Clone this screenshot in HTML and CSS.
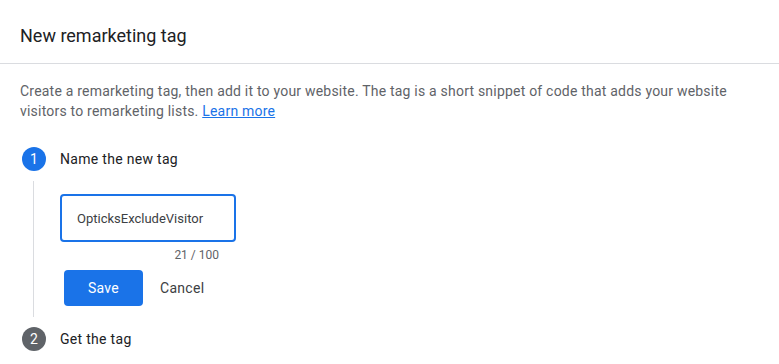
FILE: index.html
```html
<!DOCTYPE html>
<html lang="en">

<head>
    <meta charset="UTF-8">
    <meta name="viewport" content="width=device-width, initial-scale=1.0">
    <title>New remarketing tag</title>
    <link rel="stylesheet" href="styles.css">
</head>

<body>
    <div class="dialog">
        <div class="dialog-header">
            <h1>New remarketing tag</h1>
        </div>
        <div class="dialog-body">
            <p class="intro">
                Create a remarketing tag, then add it to your website. The tag is a short snippet of code that adds your website
                visitors to remarketing lists. <a href="#" class="link">Learn more</a>
            </p>

            <div class="steps">
                <div class="step">
                    <div class="step-head">
                        <span class="step-num active">1</span>
                        <span class="step-title">Name the new tag</span>
                    </div>
                    <div class="step-content">
                        <div class="field">
                            <input class="text-input" type="text" value="OpticksExcludeVisitor">
                            <div class="counter">21 / 100</div>
                        </div>
                        <div class="actions">
                            <button class="btn btn-primary">Save</button>
                            <button class="btn btn-text">Cancel</button>
                        </div>
                    </div>
                </div>
                <div class="step">
                    <div class="step-head">
                        <span class="step-num">2</span>
                        <span class="step-title">Get the tag</span>
                    </div>
                </div>
            </div>
        </div>
    </div>
</body>

</html>
```

FILE: styles.css
```css
body {
    font-family: Roboto, "Liberation Sans", Arial, sans-serif;
    background-color: #fff;
    color: #202124;
    margin: 0;
    padding: 0;
}

.dialog {
    width: 779px;
}

.dialog-header {
    height: 64px;
    border-bottom: 1px solid #dadce0;
    padding: 24px 20px 0;
    box-sizing: border-box;
}

h1 {
    margin: 0;
    font-size: 18px;
    font-weight: 400;
    line-height: 24px;
    color: #202124;
}

.dialog-body {
    padding: 17px 20px 0;
}

.intro {
    margin: 0;
    font-size: 14px;
    line-height: 20px;
    color: #5f6368;
    letter-spacing: 0.21px;
}

.link {
    color: #1a73e8;
    text-decoration: underline;
}

.steps {
    margin-top: 26px;
    padding-left: 2px;
}

.step-head {
    display: flex;
    align-items: center;
    height: 24px;
}

.step-num {
    width: 24px;
    height: 24px;
    border-radius: 50%;
    background-color: #5f6368;
    color: #fff;
    font-size: 14px;
    display: flex;
    justify-content: center;
    align-items: center;
    margin-right: 14px;
}

.step-num.active {
    background-color: #1a73e8;
}

.step-title {
    font-size: 14px;
    font-weight: 400;
    letter-spacing: 0.3px;
    color: #202124;
}

.step-content {
    margin: 10px 0 10px 11px;
    border-left: 1px solid #dadce0;
    padding: 13px 0 0 26px;
    height: 123px;
}

.field {
    width: 176px;
}

.text-input {
    display: block;
    width: 176px;
    height: 48px;
    box-sizing: border-box;
    border: 2px solid #1a73e8;
    border-radius: 4px;
    padding: 0 15px;
    font-family: Roboto, "Liberation Sans", Arial, sans-serif;
    font-size: 13px;
    color: #3c4043;
    outline: none;
}

.counter {
    text-align: right;
    padding-right: 17px;
    margin-top: 5px;
    font-size: 12px;
    line-height: 16px;
    color: #5f6368;
}

.actions {
    display: flex;
    align-items: center;
    margin-top: 7px;
    margin-left: 4px;
}

.btn {
    font-family: Roboto, "Liberation Sans", Arial, sans-serif;
    font-size: 14px;
    font-weight: 400;
    letter-spacing: 0.3px;
    border: none;
    border-radius: 4px;
    height: 36px;
    cursor: pointer;
}

.btn-primary {
    width: 79px;
    background-color: #1a73e8;
    color: #fff;
}

.btn-text {
    background: none;
    color: #3c4043;
    margin-left: 9px;
    padding: 0 8px;
}
```
